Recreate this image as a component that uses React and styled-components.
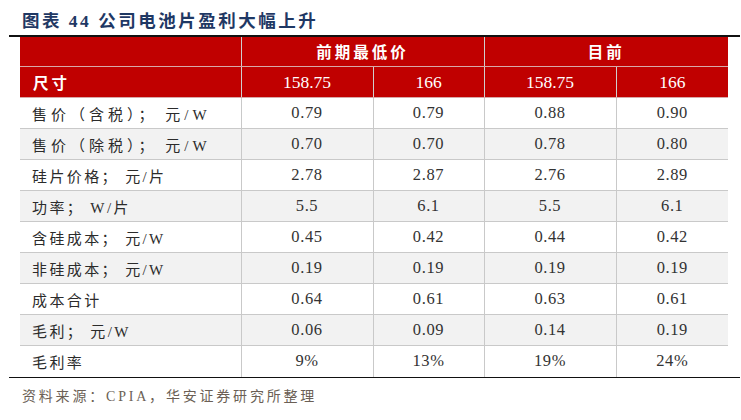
import React from "react";
import styled, { createGlobalStyle } from "styled-components";

const Global = createGlobalStyle`
  html, body { margin: 0; padding: 0; background: #fff; }
  body { font-family: "Liberation Serif", "Noto Sans CJK SC", serif; }
`;

const Page = styled.div`
  width: 741px;
  height: 420px;
  display: flex;
  flex-direction: column;
`;

const Title = styled.div`
  height: 35px;
  box-sizing: border-box;
  padding: 3px 0 0 22px;
  display: flex;
  align-items: center;
  font-family: "Liberation Serif", "Noto Sans CJK SC", serif;
  font-weight: 700;
  font-size: 17.5px;
  letter-spacing: 2.5px;
  color: #1f3864;
`;

const Rule = styled.div`
  margin-left: 9px;
  width: 731px;
  height: 1.5px;
  background: #111;
`;

const Table = styled.table`
  margin-left: 20px;
  width: 708px;
  border-collapse: collapse;
  table-layout: fixed;
`;

const HeadRow = styled.tr`
  height: ${(p) => p.$h}px;
  background: #c00000;
`;

const HeadCell = styled.th`
  padding: 0;
  color: #fff;
  font-weight: ${(p) => (p.$num ? 400 : 700)};
  font-family: ${(p) =>
    p.$num
      ? `"Liberation Serif", serif`
      : `"Noto Sans CJK SC", sans-serif`};
  font-size: ${(p) => (p.$num ? 17.5 : 15.5)}px;
  letter-spacing: ${(p) => (p.$num ? 0 : 3)}px;
  text-align: ${(p) => (p.$left ? "left" : "center")};
  padding-left: ${(p) => (p.$left ? 13 : 0)}px;
  border-right: ${(p) => (p.$last ? "none" : "1px solid #cfcfcf")};
  border-bottom: 1px solid #d8a8a8;
`;

const BodyRow = styled.tr`
  height: 31px;
  background: ${(p) => (p.$alt ? "#f2f2f2" : "#fff")};
`;

const LabelCell = styled.td`
  padding: 0 0 0 12px;
  font-family: "Liberation Serif", "Noto Sans CJK SC", serif;
  font-size: 15px;
  letter-spacing: ${(p) => (p.$wide ? 4 : 2.4)}px;
  color: #2b2b2b;
  white-space: pre;
  border-right: 1px solid #c9c9c9;
  border-bottom: ${(p) => (p.$last ? "none" : "1px solid #c9c9c9")};
`;

const NumCell = styled.td`
  padding: 0;
  text-align: center;
  font-family: "Liberation Serif", serif;
  font-size: 16.5px;
  letter-spacing: 0.6px;
  color: #333;
  border-right: ${(p) => (p.$end ? "none" : "1px solid #c9c9c9")};
  border-bottom: ${(p) => (p.$last ? "none" : "1px solid #c9c9c9")};
`;

const Source = styled.div`
  padding: 7px 0 0 22px;
  font-family: "Liberation Serif", "Noto Sans CJK SC", serif;
  font-size: 14px;
  letter-spacing: 2.8px;
  color: #6b5f55;
`;

const rows = [
  ["售价（含税）； 元/W", "0.79", "0.79", "0.88", "0.90", true],
  ["售价（除税）； 元/W", "0.70", "0.70", "0.78", "0.80", true],
  ["硅片价格； 元/片", "2.78", "2.87", "2.76", "2.89"],
  ["功率； W/片", "5.5", "6.1", "5.5", "6.1"],
  ["含硅成本； 元/W", "0.45", "0.42", "0.44", "0.42"],
  ["非硅成本； 元/W", "0.19", "0.19", "0.19", "0.19"],
  ["成本合计", "0.64", "0.61", "0.63", "0.61"],
  ["毛利； 元/W", "0.06", "0.09", "0.14", "0.19"],
  ["毛利率", "9%", "13%", "19%", "24%"],
];

export default function App() {
  return (
    <Page>
      <Global />
      <Title>图表 44 公司电池片盈利大幅上升</Title>
      <Rule />
      <Table>
        <colgroup>
          <col style={{ width: 221 }} />
          <col style={{ width: 132 }} />
          <col style={{ width: 111 }} />
          <col style={{ width: 132 }} />
          <col style={{ width: 112 }} />
        </colgroup>
        <thead>
          <HeadRow $h={30}>
            <HeadCell />
            <HeadCell colSpan={2}>前期最低价</HeadCell>
            <HeadCell colSpan={2} $last>
              目前
            </HeadCell>
          </HeadRow>
          <HeadRow $h={31}>
            <HeadCell $left>尺寸</HeadCell>
            <HeadCell $num>158.75</HeadCell>
            <HeadCell $num>166</HeadCell>
            <HeadCell $num>158.75</HeadCell>
            <HeadCell $num $last>
              166
            </HeadCell>
          </HeadRow>
        </thead>
        <tbody>
          {rows.map((r, i) => {
            const last = i === rows.length - 1;
            return (
              <BodyRow key={r[0]} $alt={i % 2 === 1}>
                <LabelCell $last={last} $wide={r[5]}>
                  {r[0]}
                </LabelCell>
                {r.slice(1, 5).map((v, j) => (
                  <NumCell key={j} $last={last} $end={j === 3}>
                    {v}
                  </NumCell>
                ))}
              </BodyRow>
            );
          })}
        </tbody>
      </Table>
      <Rule />
      <Source>资料来源：CPIA，华安证券研究所整理</Source>
    </Page>
  );
}
